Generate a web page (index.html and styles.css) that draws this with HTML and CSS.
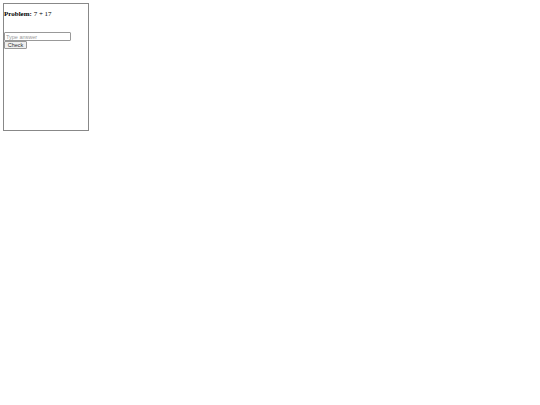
FILE: index.html
```html
<!DOCTYPE html>
<html>
<head>
<meta charset="utf-8">
<link rel="stylesheet" href="styles.css">
</head>
<body>
<div class="card">
  <p class="problem"><b>Problem:</b> 7 + 17</p>
  <input class="answer" type="text" placeholder="Type answer">
  <button class="check">Check</button>
</div>
</body>
</html>
```

FILE: styles.css
```css
body {
  margin: 3px;
  font-family: "Liberation Serif", serif;
}
.card {
  width: 84px;
  height: 126px;
  border: 1px solid #888;
  display: flex;
  flex-direction: column;
  align-items: flex-start;
}
.problem {
  margin: 6px 0 13px 0;
  font-size: 7px;
  line-height: 9px;
}
.answer {
  box-sizing: border-box;
  width: 67px;
  height: 9px;
  margin: 0;
  padding: 0 1px;
  font-family: "Liberation Sans", sans-serif;
  font-size: 5.5px;
  border: 1px solid #999;
  border-radius: 1px;
}
.answer::placeholder {
  color: #999;
}
.check {
  box-sizing: border-box;
  width: 23px;
  height: 8px;
  margin: 0;
  padding: 0;
  font-family: "Liberation Sans", sans-serif;
  font-size: 5.5px;
  line-height: 5px;
  color: #333;
  border: 1px solid #999;
  border-radius: 1px;
  background: #efefef;
}
```
